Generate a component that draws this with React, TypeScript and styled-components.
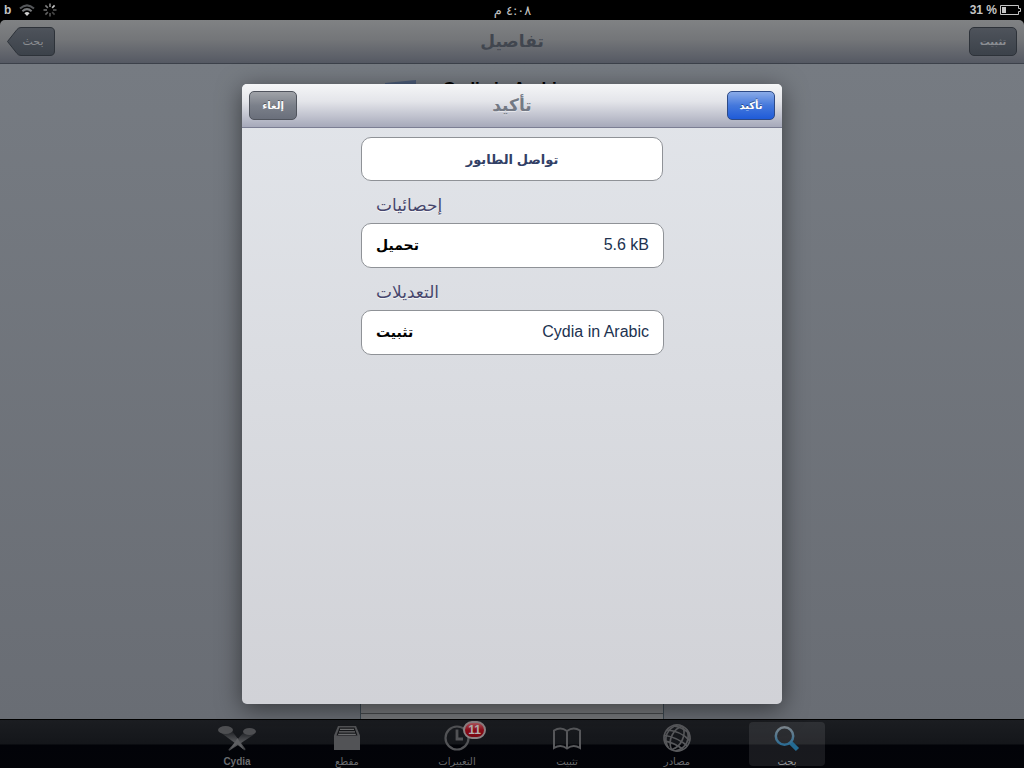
import React from "react";
import styled, { createGlobalStyle, css } from "styled-components";

const GlobalStyle = createGlobalStyle`
  * { box-sizing: border-box; }
  body {
    margin: 0;
    background: #000;
    font-family: "Liberation Sans", "DejaVu Sans", sans-serif;
  }
  button, a { font-family: inherit; }
`;

const Screen = styled.div`
  position: relative;
  display: flex;
  flex-direction: column;
  min-height: 100vh;
`;

const StatusBar = styled.header`
  display: grid;
  grid-template-columns: 1fr auto 1fr;
  align-items: center;
  height: 20px;
  padding: 0 3px 0 4px;
  background: #000;
  color: #c4c4c4;
  font-weight: bold;
`;

const StatusGroup = styled.div<{ $end?: boolean }>`
  display: flex;
  align-items: center;
  gap: ${(p) => (p.$end ? "3px" : "8px")};
  justify-content: ${(p) => (p.$end ? "flex-end" : "flex-start")};
  font-size: 12px;
  white-space: nowrap;
`;

const Clock = styled.time`
  font-family: "DejaVu Sans", sans-serif;
  font-size: 13px;
  font-weight: normal;
`;

const NavBar = styled.div<{ $dimmed?: boolean }>`
  display: grid;
  grid-template-columns: 1fr auto 1fr;
  align-items: center;
  height: 44px;
  padding: 0 7px;
  ${(p) =>
    p.$dimmed
      ? css`
          background: linear-gradient(#808284, #747679 45%, #555963);
          border-bottom: 1px solid #3c414a;
          border-radius: 5px 5px 0 0;
          color: #41464f;
        `
      : css`
          background: linear-gradient(#f5f6f7, #e4e5ea 40%, #a6a9ba);
          border-bottom: 1px solid #7b7e93;
          color: #737984;
          text-shadow: 0 1px 0 rgba(255, 255, 255, 0.5);
        `}
`;

const NavTitle = styled.h1`
  margin: 0;
  font-size: 17px;
  line-height: 24px;
  font-weight: bold;
`;

const NavSide = styled.div<{ $end?: boolean }>`
  display: flex;
  justify-content: ${(p) => (p.$end ? "flex-end" : "flex-start")};
`;

type Tone = "dim" | "grey" | "blue";

const tones = {
  dim: css`
    background: linear-gradient(#4e535b, #3c424a);
    border-color: #2d3239;
    color: #8b8e92;
  `,
  grey: css`
    background: linear-gradient(#a0a3a8, #7b808a 50%, #6a6f7b);
    border-color: #50545d;
    color: #fff;
    text-shadow: 0 -1px 0 rgba(0, 0, 0, 0.4);
  `,
  blue: css`
    background: linear-gradient(#8aabe8, #4478dc 50%, #1f5bd8);
    border-color: #2d4a86;
    color: #fff;
    text-shadow: 0 -1px 0 rgba(0, 0, 0, 0.4);
  `,
};

const BarButton = styled.button<{ $tone: Tone }>`
  min-width: 48px;
  height: 29px;
  padding: 0 8px;
  border: 1px solid;
  border-radius: 5px;
  font-size: 10px;
  font-weight: bold;
  ${(p) => tones[p.$tone]}
`;

const BackButton = styled.button`
  position: relative;
  width: 48px;
  height: 29px;
  padding: 0 0 0 4px;
  border: 0;
  background: none;
  color: #8b8e92;
  font-size: 11px;
`;

const BackShape = styled.svg`
  position: absolute;
  inset: 0;
`;

const ButtonText = styled.span`
  position: relative;
`;

const Page = styled.main`
  display: flex;
  flex: 1;
  flex-direction: column;
  align-items: center;
  background: linear-gradient(#767b82, #696d74);
`;

const PackageHeader = styled.div`
  display: flex;
  gap: 26px;
  width: 302px;
  padding: 14px 24px;
`;

const PackageName = styled.h2`
  margin: 0;
  font-size: 17px;
  line-height: 22px;
  color: #000;
  white-space: nowrap;
`;

const PackageCard = styled.div`
  display: flex;
  flex: 1;
  flex-direction: column;
  justify-content: flex-end;
  width: 304px;
  border: solid #3b4750;
  border-width: 0 1px;
  background: #77797c;
`;

const CardRow = styled.div`
  height: 6px;
  border-top: 1px solid #46484b;
`;

const TabStrip = styled.footer`
  height: 49px;
  border-top: 1px solid #000;
  background: linear-gradient(#1b1d21, #14161a 50%, #020308 52%, #030408);
`;

const TabBar = styled.nav`
  display: flex;
  justify-content: center;
  gap: 34px;
  padding-top: 2px;
`;

const Tab = styled.a<{ $active?: boolean }>`
  position: relative;
  display: flex;
  flex-direction: column;
  align-items: center;
  width: 76px;
  height: 44px;
  border-radius: 4px;
  color: ${(p) => (p.$active ? "#929497" : "#6a6b6e")};
  background: ${(p) => (p.$active ? "rgba(255,255,255,.09)" : "none")};
  font-size: 10px;
  line-height: 16px;
  text-decoration: none;

  &:lang(en) {
    font-weight: bold;
  }
`;

const TabIcon = styled.svg`
  display: block;
  flex: none;
  width: 40px;
  height: 32px;
`;

const Badge = styled.span`
  position: absolute;
  top: -1px;
  left: 44px;
  min-width: 23px;
  height: 18px;
  border: 2px solid #8d8385;
  border-radius: 9px;
  background: linear-gradient(#b0555c, #8c0c18 50%, #780a14);
  color: #b5b0b1;
  font-size: 12px;
  font-weight: bold;
  line-height: 14px;
  text-align: center;
`;

const Backdrop = styled.div`
  position: absolute;
  inset: 20px 0 0;
  display: flex;
  align-items: center;
  justify-content: center;
`;

const Dialog = styled.section`
  display: flex;
  flex-direction: column;
  width: 540px;
  max-width: 100%;
  min-height: 620px;
  overflow: hidden;
  border-radius: 5px;
  background: linear-gradient(#e2e5ea, #d1d2d7);
  box-shadow: 0 5px 24px 0 rgba(0, 0, 0, 0.5);
`;

const DialogBody = styled.div`
  width: 304px;
  max-width: 100%;
  margin: 0 auto;
  padding: 9px 0 0 1px;
`;

const cell = css`
  border: 1px solid #8f9297;
  border-radius: 10px;
  background: #fff;
`;

const QueueButton = styled.button`
  ${cell}
  display: block;
  width: 302px;
  max-width: 100%;
  height: 44px;
  color: #324066;
  font-size: 13px;
  font-weight: bold;
`;

const GroupTitle = styled.h2`
  margin: 0;
  padding: 13px 15px 6px;
  color: #46466c;
  font-size: 17px;
  line-height: 23px;
  font-weight: normal;
  text-shadow: 0 1px 0 rgba(255, 255, 255, 0.7);
`;

const Entry = styled.dl`
  ${cell}
  display: flex;
  align-items: center;
  justify-content: space-between;
  height: 45px;
  margin: 0;
  padding: 0 14px 1px;
`;

const EntryLabel = styled.dt`
  font-size: 14px;
  font-weight: bold;
  color: #000;
`;

const EntryValue = styled.dd`
  margin: 0;
  font-size: 16px;
  color: #21324f;
`;

const Wifi = () => (
  <svg width="16" height="12" viewBox="0 0 16 12" fill="none" aria-hidden="true">
    <path d="M1 4.6Q8-1.8 15 4.6" stroke="#55575a" strokeWidth="2" />
    <path d="M3.4 7.2Q8 3 12.6 7.2" stroke="#77797b" strokeWidth="2" />
    <path d="M5.4 9.2Q8 7 10.6 9.2L8 12Z" fill="#d0d0d0" />
  </svg>
);

const spokes = ["#8d8d8d", "#c4c4c4", "#555", "#444", "#555", "#606060", "#6d6d6d", "#7d7d7d"];

const Spinner = () => (
  <svg width="14" height="14" viewBox="-7 -7 14 14" aria-hidden="true">
    {spokes.map((c, i) => (
      <path key={i} d="M0-3V-6.5" stroke={c} strokeWidth="1.6" transform={`rotate(${i * 45})`} />
    ))}
  </svg>
);

const Battery = () => (
  <svg width="21" height="10" viewBox="0 0 21 10" fill="none" aria-hidden="true">
    <path d="M.5.5H18.5V3.5H20.5V6.5H18.5V9.5H.5Z" stroke="#c4c4c4" />
    <path d="M2 2H6V8H2Z" fill="#c4c4c4" />
  </svg>
);

const CydiaIcon = () => (
  <TabIcon viewBox="0 0 40 32" aria-hidden="true">
    <defs>
      <linearGradient id="beam" x1="0" y1="0" x2="0" y2="1">
        <stop offset="0" stopColor="#1f2125" />
        <stop offset=".6" stopColor="#5a5b5e" />
        <stop offset="1" stopColor="#3a3b3e" />
      </linearGradient>
    </defs>
    <path d="M5 11.500L15 9 28.500 27 28 28.500Z" fill="url(#beam)" />
    <path d="M27 10L37 12.500 12 29 11.500 27.500Z" fill="url(#beam)" />
    <path d="M20.500 16L27 28 20.500 21.500 13 28Z" fill="#5f6063" />
    <ellipse cx="8.500" cy="8" rx="7.500" ry="4" fill="#4e4f52" />
    <ellipse cx="32.500" cy="9.500" rx="6.500" ry="3.500" fill="#4e4f52" />
  </TabIcon>
);

const SectionsIcon = () => (
  <TabIcon viewBox="0 0 40 32" aria-hidden="true">
    <path d="M11 4H29L33 13.500V28H7V13.500Z" fill="#525356" />
    <path d="M12.500 5.500H27.500L30.500 13.500H9.500Z" fill="#16171a" />
    <path d="M13 7.300H27M12 9.800H28M11.200 12.400H28.800" stroke="#6a6b6d" strokeWidth="1.300" />
  </TabIcon>
);

const ChangesIcon = () => (
  <TabIcon viewBox="0 0 40 32" fill="none" stroke="#525356" aria-hidden="true">
    <circle cx="20" cy="16" r="11.500" strokeWidth="2.200" />
    <path d="M20 7.500V17H26" strokeWidth="2.800" />
  </TabIcon>
);

const InstalledIcon = () => (
  <TabIcon viewBox="0 0 40 32" fill="none" stroke="#57585b" strokeWidth="2" aria-hidden="true">
    <path d="M20 9C16 6 11 6 7 8.500V26C11 23.500 16 23.500 20 26.500C24 23.500 29 23.500 33 26V8.500C29 6 24 6 20 9ZV26" />
  </TabIcon>
);

const SourcesIcon = () => (
  <TabIcon viewBox="0 0 40 32" fill="none" stroke="#57585b" strokeWidth="1.700" aria-hidden="true">
    <g transform="translate(20 16) rotate(25)">
      <circle r="13" />
      <path d="M0-13C-7-8-8 6 0 13M0-13C7-8 8 6 0 13M-5-12C-13-5-13 6-4 12.300M5-12C13-5 13 6 4 12.300" />
      <path d="M-12.500-3Q0-8 12.500-3M-13 3Q0-1 13 3M-10.500 8Q0 5 10.500 8M-9-9.500Q0-12 9-9.500" />
    </g>
  </TabIcon>
);

const SearchIcon = () => (
  <TabIcon viewBox="0 0 40 32" fill="none" aria-hidden="true">
    <defs>
      <linearGradient id="lens" x1="0" y1="0" x2="0" y2="1">
        <stop offset="0" stopColor="#7b858d" />
        <stop offset="1" stopColor="#2c6c94" />
      </linearGradient>
    </defs>
    <path d="M23.500 20.500L30.500 27.500" stroke="#236a92" strokeWidth="4.500" />
    <circle cx="17.500" cy="14" r="8.700" stroke="url(#lens)" strokeWidth="2.500" />
  </TabIcon>
);

const tabs = [
  { label: "Cydia", lang: "en", Icon: CydiaIcon },
  { label: "مقطع", Icon: SectionsIcon },
  { label: "التغييرات", Icon: ChangesIcon, badge: 11 },
  { label: "تثبيت", Icon: InstalledIcon },
  { label: "مصادر", Icon: SourcesIcon },
  { label: "بحث", Icon: SearchIcon, active: true },
];

export default function App() {
  return (
    <Screen lang="ar">
      <GlobalStyle />
      <StatusBar>
        <StatusGroup>
          <span>b</span>
          <Wifi />
          <Spinner />
        </StatusGroup>
        <Clock dir="rtl">٤:٠٨ م</Clock>
        <StatusGroup $end>
          <span>31 %</span>
          <Battery />
        </StatusGroup>
      </StatusBar>

      <NavBar $dimmed>
        <NavSide>
          <BackButton>
            <BackShape width="48" height="29" viewBox="0 0 48 29" aria-hidden="true">
              <defs>
                <linearGradient id="back" x1="0" y1="0" x2="0" y2="1">
                  <stop offset="0" stopColor="#4e535b" />
                  <stop offset="1" stopColor="#3c424a" />
                </linearGradient>
              </defs>
              <path
                d="M.5 14.500L10 2.500Q11.500.5 14 .5H43Q47.500.5 47.500 5V24Q47.500 28.500 43 28.500H14Q11.500 28.500 10 26.500Z"
                fill="url(#back)"
                stroke="#2d3239"
              />
            </BackShape>
            <ButtonText>بحث</ButtonText>
          </BackButton>
        </NavSide>
        <NavTitle>تفاصيل</NavTitle>
        <NavSide $end>
          <BarButton $tone="dim">تثبيت</BarButton>
        </NavSide>
      </NavBar>

      <Page>
        <PackageHeader>
          <svg width="32" height="32" viewBox="0 0 32 32" aria-hidden="true">
            <path d="M0 5L31 2V32H0Z" fill="#4b5c78" />
          </svg>
          <PackageName>Cydia in Arabic</PackageName>
        </PackageHeader>
        <PackageCard>
          <CardRow />
        </PackageCard>
      </Page>

      <TabStrip>
        <TabBar>
          {tabs.map(({ label, lang, Icon, badge, active }) => (
            <Tab key={label} href="#" lang={lang} $active={active}>
              <Icon />
              {label}
              {badge && <Badge>{badge}</Badge>}
            </Tab>
          ))}
        </TabBar>
      </TabStrip>

      <Backdrop>
        <Dialog role="dialog" aria-modal="true" aria-labelledby="confirm-title">
          <NavBar>
            <NavSide>
              <BarButton $tone="grey">إلغاء</BarButton>
            </NavSide>
            <NavTitle as="h2" id="confirm-title">تأكيد</NavTitle>
            <NavSide $end>
              <BarButton $tone="blue">تأكيد</BarButton>
            </NavSide>
          </NavBar>
          <DialogBody>
            <QueueButton>تواصل الطابور</QueueButton>
            <GroupTitle>إحصائيات</GroupTitle>
            <Entry>
              <EntryLabel>تحميل</EntryLabel>
              <EntryValue>5.6 kB</EntryValue>
            </Entry>
            <GroupTitle>التعديلات</GroupTitle>
            <Entry>
              <EntryLabel>تثبيت</EntryLabel>
              <EntryValue>Cydia in Arabic</EntryValue>
            </Entry>
          </DialogBody>
        </Dialog>
      </Backdrop>
    </Screen>
  );
}
